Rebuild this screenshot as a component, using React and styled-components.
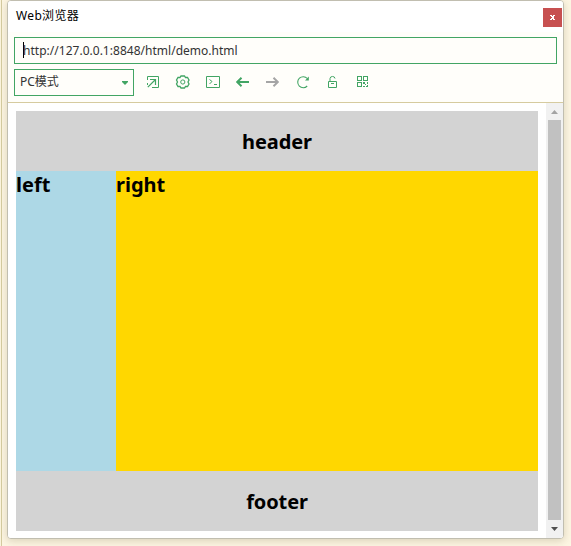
import React from "react";
import styled, { createGlobalStyle } from "styled-components";

const GlobalStyle = createGlobalStyle`
  * { box-sizing: border-box; }
  body { margin: 0; overflow: hidden; background: #fdf6e3; font-family: "Noto Sans", "Noto Sans CJK SC", sans-serif; }
`;
const Desktop = styled.div`
  width: 571px;
  height: 546px;
  padding-left: 4px;
  border-left: 1px solid #faf3dc;
  background: linear-gradient(90deg, #d5cba0 0 1px, #fdf6e3 1px);
  overflow: hidden;
`;
const Window = styled.main`
  width: 557px;
  height: 539px;
  margin-left: 2px;
  display: flex;
  flex-direction: column;
  border: 1px solid #c1beb0;
  border-radius: 4px;
  background: #fffefa;
  overflow: hidden;
  box-shadow: 0 2px 9px rgba(100, 85, 45, 0.23);
`;
const TitleBar = styled.header`
  height: 31px;
  flex: none;
  display: flex;
  justify-content: space-between;
  padding: 7px 1px 0 8px;
  background: #fff;
`;
const Title = styled.div`
  margin-top: -1px;
  font-size: 12px;
  line-height: 18px;
  letter-spacing: 0.35px;
  color: #000;
`;
const CloseButton = styled.button`
  width: 19px;
  height: 19px;
  padding: 0;
  border: 0;
  background: #c75050;
  display: grid;
  place-items: center;
`;
const AddressBar = styled.div`
  height: 27px;
  flex: none;
  margin: 5px 6px 5px;
  padding-left: 8px;
  border: 1px solid #42a564;
  display: flex;
  align-items: center;
  font-size: 12px;
  color: #333;
`;
const Caret = styled.span`
  width: 1px;
  height: 16px;
  margin: 0 -1px 2px 0;
  background: #000;
`;
const Address = styled.span`
  line-height: 18px;
  letter-spacing: 0.02px;
`;
const Toolbar = styled.div`
  height: 34px;
  flex: none;
  display: flex;
  align-items: flex-start;
  padding-left: 6px;
  border-bottom: 1px solid #d6cb9f;
`;
const ModeSelect = styled.div`
  width: 120px;
  height: 27px;
  border: 1px solid #42a564;
  display: flex;
  align-items: center;
  justify-content: space-between;
  padding: 0 5px;
  font-size: 12px;
  color: #333;
`;
const ModeLabel = styled.span`
  line-height: 18px;
  padding-bottom: 1px;
`;
const Tools = styled.div`
  display: flex;
  gap: 14px;
  margin: 5px 0 0 11px;
`;
const ToolIcon = styled.svg`
  width: 16px;
  height: 16px;
  display: block;
  fill: none;
  stroke: ${(p) => p.$color || "#42a564"};
  color: ${(p) => p.$color || "#42a564"};
  stroke-width: 1;
`;
const Viewport = styled.div`
  flex: 1;
  min-height: 0;
  display: flex;
  background: #fff;
`;
const Page = styled.div`
  width: 538px;
  flex: none;
  padding: 8px;
  color: #000;
  font-size: 20px;
  font-weight: 700;
`;
const Band = styled.div`
  height: 60px;
  background: #d3d3d3;
  text-align: center;
  line-height: 62px;
  letter-spacing: -0.1px;
`;
const Columns = styled.div`
  height: 300px;
  display: grid;
  grid-template-columns: 100px 1fr;
  line-height: 27px;
`;
const Column = styled.div`
  background: ${(p) => p.$color};
`;
const Scrollbar = styled.div`
  width: 17px;
  display: flex;
  flex-direction: column;
  align-items: center;
  background: #f1f1f1;
`;
const Thumb = styled.div`
  width: 13px;
  height: 400px;
  background: #c1c1c1;
`;
const ScrollArrow = styled.svg`
  width: 17px;
  height: 17px;
  display: block;
  fill: ${(p) => p.$color};
`;
const Glyph = styled.svg`
  display: block;
`;

export default function App() {
  return (
    <>
      <GlobalStyle />
      <Desktop>
        <Window>
          <TitleBar>
            <Title>Web浏览器</Title>
            <CloseButton aria-label="Close">
              <Glyph width="5" height="5" viewBox="0 0 5 5" fill="#fff" shapeRendering="crispEdges">
                <path d="M0 0h2v1H0zM3 0h2v1H3zM1 1h3v1H1zM1.500 2h2v1h-2zM1 3h3v1H1zM0 4h2v1H0zM3 4h2v1H3z" />
              </Glyph>
            </CloseButton>
          </TitleBar>
          <AddressBar>
            <Caret />
            <Address>http://127.0.0.1:8848/html/demo.html</Address>
          </AddressBar>
          <Toolbar>
            <ModeSelect>
              <ModeLabel>PC模式</ModeLabel>
              <Glyph width="6" height="4" viewBox="0 0 6 4" fill="#42a564"><path d="M0 0h6v1L3 4 0 1z" /></Glyph>
            </ModeSelect>
            <Tools>
              <ToolIcon>
                <path d="M2.500 6V2.500h11v11H7M2.500 9v2" />
                <path d="M2.800 13.200L10 6M5 5.500h5.500V11" strokeWidth="1.200" />
              </ToolIcon>
              <ToolIcon>
                <path d="M6 2h3.500l1 1.500h2l1.500 2.500-1 2 1 2-1.500 2.500h-2l-1 1.500H6l-1-1.500H3L1.500 10l1-2-1-2L3 3.500h2z" strokeWidth="1.300" />
                <circle cx="7.800" cy="8" r="2.100" />
              </ToolIcon>
              <ToolIcon>
                <path d="M1.500 2.500h13v11h-13z" />
                <path d="M4.500 5.500l2.500 2-2.500 2.500M9 10.500h3" />
              </ToolIcon>
              <ToolIcon><path d="M14 8H3M6.500 3.800L2.200 8l4.300 4.200" strokeWidth="2" /></ToolIcon>
              <ToolIcon $color="#a5a5a5"><path d="M1 8h11M8.500 3.800L12.800 8l-4.300 4.200" strokeWidth="2" /></ToolIcon>
              <ToolIcon>
                <path d="M12.300 4.500A5.500 5.500 0 1 0 12.200 12" strokeWidth="1.100" />
                <path d="M13.800 2.500v4H10z" fill="currentColor" stroke="none" />
              </ToolIcon>
              <ToolIcon>
                <path d="M3.500 7.500h8v6h-8zM5 7V4.500a2.300 2.300 0 0 1 2.300-2h.4A2.300 2.300 0 0 1 10 4.500M6 9.500h3" />
              </ToolIcon>
              <ToolIcon shapeRendering="crispEdges">
                <path d="M2.500 2.500h4v4h-4zM8.500 2.500h4v4h-4zM2.500 8.500h4v4h-4z" />
                <path d="M8 8h2v2H8zM12 8h1v2h-1zM8 12h2v1H8zM10 10h1v1h-1zM11 12h2v1h-2zM12 11h1v1h-1z" fill="currentColor" stroke="none" />
              </ToolIcon>
            </Tools>
          </Toolbar>
          <Viewport>
            <Page>
              <Band>header</Band>
              <Columns>
                <Column $color="#add8e6">left</Column>
                <Column $color="#ffd700">right</Column>
              </Columns>
              <Band>footer</Band>
            </Page>
            <Scrollbar>
              <ScrollArrow $color="#a3a3a3"><path d="M5 11l3.500-4 3.500 4z" /></ScrollArrow>
              <Thumb />
              <ScrollArrow $color="#505050"><path d="M5 7h7l-3.500 4z" /></ScrollArrow>
            </Scrollbar>
          </Viewport>
        </Window>
      </Desktop>
    </>
  );
}
